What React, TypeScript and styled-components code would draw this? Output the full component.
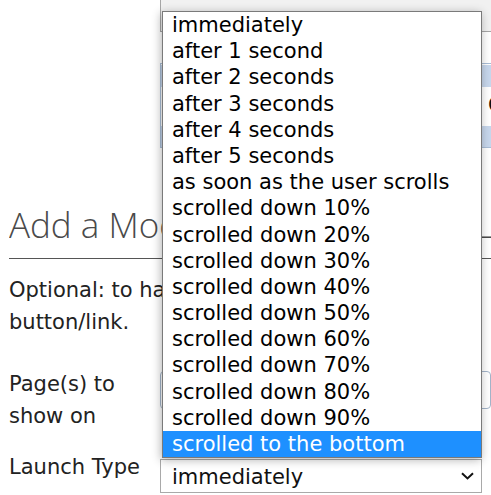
import React from "react";
import styled, { createGlobalStyle } from "styled-components";

const Global = createGlobalStyle`
  html, body { margin: 0; padding: 0; background: #fff; }
  body {
    font-family: "DejaVu Sans", Verdana, sans-serif;
    font-size: 21px;
    line-height: 1.5;
    color: #222;
    overflow: hidden;
  }
`;

const Page = styled.div`
  position: relative;
  width: 491px;
  height: 495px;
  overflow: hidden;
  padding-left: 9px;
  box-sizing: border-box;
`;

const FieldOnly = styled.div<{ $mt: number }>`
  margin-top: ${(p) => p.$mt}px;
  margin-left: 151px;
`;

const GreyBox = styled.div`
  width: 360px;
  height: 32px;
  box-sizing: border-box;
  border: 1px solid #a6a6a6;
  border-top: none;
  background: #f1f1f1;
`;

const ListBox = styled.div`
  width: 360px;
  height: 85px;
  box-sizing: border-box;
  border: 1px solid #a9bdd6;
  display: flex;
  flex-direction: column;
`;

const ListRow = styled.div<{ $h: number; $sel?: boolean }>`
  height: ${(p) => p.$h}px;
  background: ${(p) => (p.$sel ? "#c7d7ec" : "#fff")};
  display: flex;
  align-items: center;
  padding-left: 327px;
  color: #111;
  white-space: nowrap;
  overflow: hidden;
  margin-top: ${(p) => (p.$sel ? 1 : 0)}px;
`;

const Heading = styled.h2`
  margin: 53px -20px 0 0;
  padding-bottom: 10px;
  font-family: "Open Sans", sans-serif;
  font-weight: 300;
  font-size: 35px;
  line-height: normal;
  color: #4a4a4a;
  border-bottom: 1px solid #555;
  white-space: nowrap;
  overflow: hidden;
`;

const Para = styled.p`
  margin: 16px 0 0;
  line-height: 31.5px;
  width: 473px;
`;

const FormRow = styled.div<{ $mt: number }>`
  display: flex;
  align-items: flex-start;
  margin-top: ${(p) => p.$mt}px;
`;

const Label = styled.div`
  width: 151px;
  flex: none;
  line-height: 31.5px;
`;

const PagesField = styled.div`
  margin-top: 2px;
  width: 340px;
  height: 38px;
  box-sizing: border-box;
  border: 1px solid #a3b4c9;
  border-radius: 4px;
  background: #fff;
`;

const SelectBox = styled.div`
  margin-top: 7px;
  width: 322px;
  height: 34px;
  box-sizing: border-box;
  border: 1px solid #a9a9a9;
  background: #fff;
  display: flex;
  padding: 0 7px 0 11px;
  color: #111;
`;

const SelectValue = styled.span`
  padding-top: 5px;
  line-height: 24px;
  flex: 1;
`;

const Chevron = styled.svg`
  align-self: center;
  flex: none;
`;

const Popup = styled.ul`
  position: absolute;
  left: 162px;
  top: 11px;
  width: 320px;
  margin: 0;
  padding: 0;
  list-style: none;
  box-sizing: border-box;
  border: 1px solid #7a7a7a;
  background: #fff;
  box-shadow: -1px 2px 9px rgba(0, 0, 0, 0.3);
`;

const Option = styled.li<{ $active?: boolean }>`
  height: 26.2px;
  line-height: 26.2px;
  padding-left: 9px;
  white-space: nowrap;
  color: ${(p) => (p.$active ? "#fff" : "#000")};
  background: ${(p) => (p.$active ? "#1e90ff" : "transparent")};
`;

const options = [
  "immediately",
  "after 1 second",
  "after 2 seconds",
  "after 3 seconds",
  "after 4 seconds",
  "after 5 seconds",
  "as soon as the user scrolls",
  "scrolled down 10%",
  "scrolled down 20%",
  "scrolled down 30%",
  "scrolled down 40%",
  "scrolled down 50%",
  "scrolled down 60%",
  "scrolled down 70%",
  "scrolled down 80%",
  "scrolled down 90%",
  "scrolled to the bottom",
];

export default function App() {
  return (
    <>
      <Global />
      <Page>
        <FieldOnly $mt={0}>
          <GreyBox />
        </FieldOnly>
        <FieldOnly $mt={31}>
          <ListBox>
            <ListRow $h={22} $sel />
            <ListRow $h={39}>Choose</ListRow>
            <ListRow $h={21} $sel />
          </ListBox>
        </FieldOnly>
        <Heading>Add a Modal Popup for every Login Page</Heading>
        <Para>Optional: to have the popup launch from a button/link.</Para>
        <FormRow $mt={31}>
          <Label>
            Page(s) to
            <br />
            show on
          </Label>
          <PagesField />
        </FormRow>
        <FormRow $mt={20}>
          <Label>Launch Type</Label>
          <SelectBox>
            <SelectValue>immediately</SelectValue>
            <Chevron width="13" height="8" viewBox="0 0 13 8">
              <path d="M1 1.2 L6.5 6.4 L12 1.2" fill="none" stroke="#111" strokeWidth="2" />
            </Chevron>
          </SelectBox>
        </FormRow>
        <Popup>
          {options.map((o, i) => (
            <Option key={o} $active={i === options.length - 1}>
              {o}
            </Option>
          ))}
        </Popup>
      </Page>
    </>
  );
}
